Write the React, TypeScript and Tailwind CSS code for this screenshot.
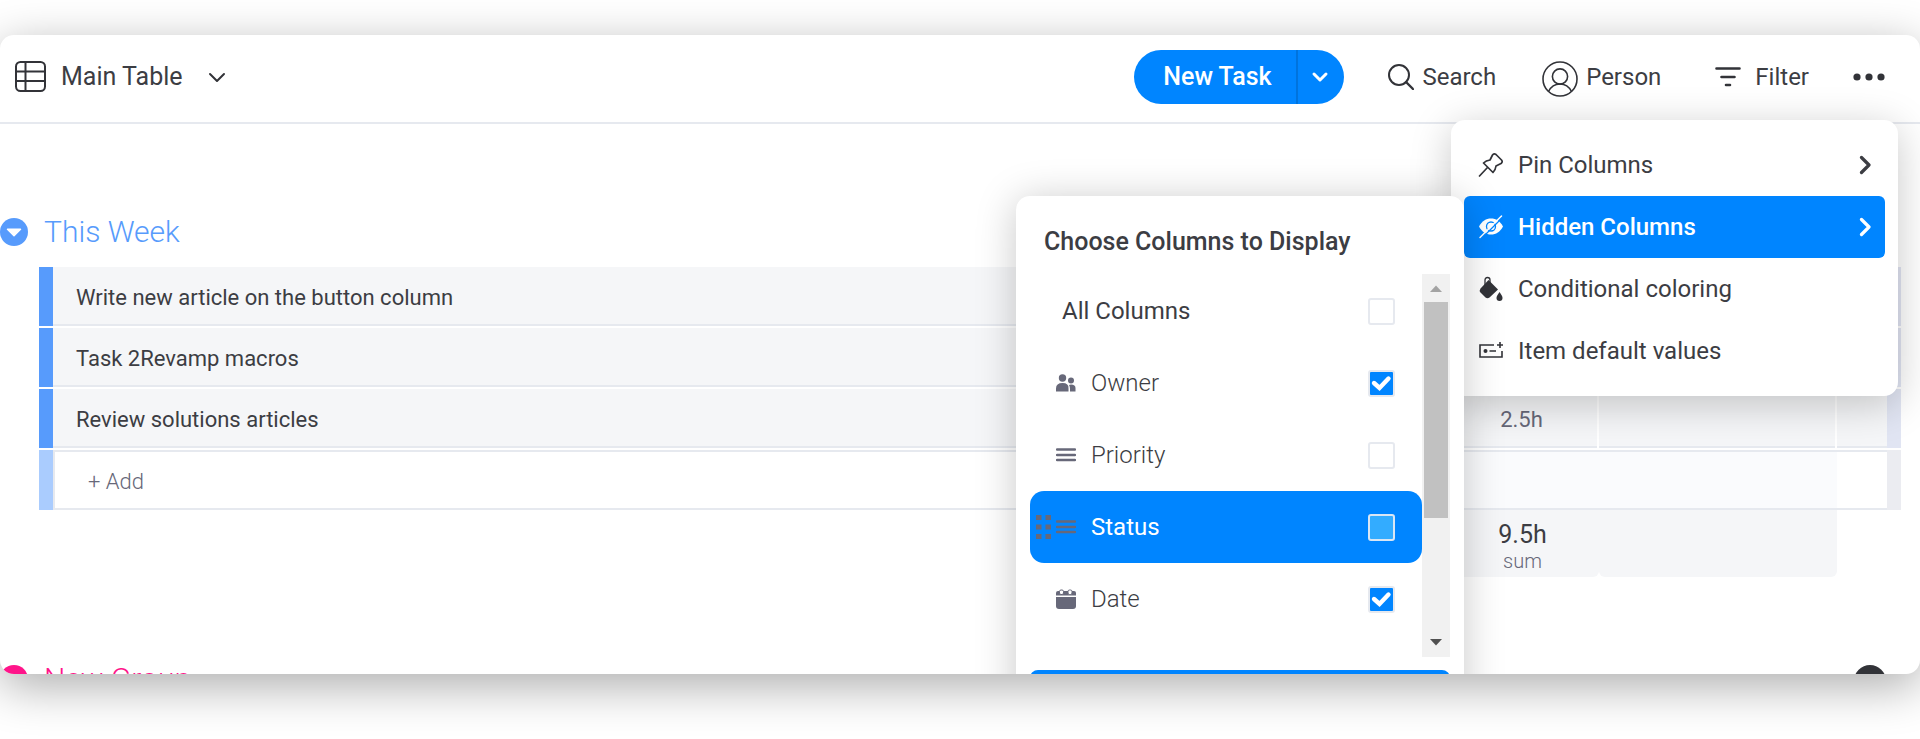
import { useState } from "react";
import type { ReactNode } from "react";

const tasks = [
  { name: "Write new article on the button column", estimate: "" },
  { name: "Task 2Revamp macros", estimate: "" },
  { name: "Review solutions articles", estimate: "2.5h" },
];

export default function App() {
  return (
    <div className="flex h-screen flex-col overflow-hidden bg-white pt-[35px] pb-[65px] font-[Roboto,sans-serif] text-[#3c3d43]">
      <main className="relative min-h-0 flex-1 overflow-hidden rounded-[14px] bg-white shadow-[0_12px_48px_rgba(0,0,0,0.33)]">
        <Toolbar />
        <section className="pt-[86px]">
          <GroupTitle color="#579bfc" title="This Week" />
          <TaskTable />
        </section>
        <section className="relative pt-20">
          <GroupTitle color="#ff158a" title="New Group" />
          <span className="absolute top-[88px] right-[34px] h-8 w-8 rounded-full bg-[#323338]"></span>
        </section>
        <ViewMenu />
      </main>
    </div>
  );
}

function Toolbar() {
  return (
    <header className="flex h-[89px] items-center border-b-2 border-[#e6e9ef] pr-[35px] pb-1 pl-[15px]">
      <button className="flex items-center">
        <TableIcon />
        <span className="ml-[14px] text-[25px] leading-8">Main Table</span>
        <svg className="ml-6 h-5 w-5" viewBox="0 0 20 20" fill="none">
          <path
            d="M3 7l7 7 7-7"
            stroke="#323338"
            strokeWidth="2"
            strokeLinecap="round"
            strokeLinejoin="round"
          />
        </svg>
      </button>
      <div className="ml-auto flex h-[54px] overflow-hidden rounded-full bg-[#0085ff] text-white">
        <button className="w-[162px] pl-1 text-[25px] font-medium">
          New Task
        </button>
        <button
          aria-label="More task types"
          className="flex w-12 items-center border-l-2 border-[#0073dd] pl-3"
        >
          <svg className="h-5 w-5" viewBox="0 0 20 20" fill="none">
            <path
              d="M4 7l6 6 6-6"
              stroke="currentColor"
              strokeWidth="3"
              strokeLinecap="round"
              strokeLinejoin="round"
            />
          </svg>
        </button>
      </div>
      <button className="ml-11 flex items-center gap-2">
        <svg className="h-[26px] w-[26px]" viewBox="0 0 26 26" fill="none">
          <circle cx="11" cy="11" r="10" stroke="#323338" strokeWidth="2" />
          <path
            d="M18 18l7 7"
            stroke="#323338"
            strokeWidth="2.4"
            strokeLinecap="round"
          />
        </svg>
        <span className="text-2xl">Search</span>
      </button>
      <button className="ml-[46px] flex items-center gap-2">
        <PersonIcon />
        <span className="text-2xl">Person</span>
      </button>
      <button className="ml-[54px] flex items-center gap-[14px]">
        <svg className="h-[22px] w-[26px]" viewBox="0 0 26 22" fill="none">
          <path
            d="M1.5 2.5h23M6.5 11h13M11 19h4"
            stroke="#323338"
            strokeWidth="2.6"
            strokeLinecap="round"
          />
        </svg>
        <span className="text-2xl">Filter</span>
      </button>
      <button aria-label="More options" className="ml-11">
        <svg className="h-8 w-8" viewBox="0 0 32 32" fill="#323338">
          <circle cx="4" cy="16" r="3.6" />
          <circle cx="16" cy="16" r="3.6" />
          <circle cx="28" cy="16" r="3.6" />
        </svg>
      </button>
    </header>
  );
}

function GroupTitle({ color, title }: { color: string; title: string }) {
  return (
    <div className="flex h-11 items-center gap-4" style={{ color }}>
      <svg className="h-7 w-7" viewBox="0 0 28 28">
        <circle cx="14" cy="14" r="14" fill="currentColor" />
        <path
          d="M7.5 11.2h13L14 17.8z"
          fill="#fff"
          stroke="#fff"
          strokeWidth="1.5"
          strokeLinejoin="round"
        />
      </svg>
      <h2 className="text-[30px] leading-9 font-light">{title}</h2>
    </div>
  );
}

function TaskTable() {
  return (
    <div className="pt-[13px] pr-[19px] pl-[39px]">
      <table className="w-full table-fixed border-separate border-spacing-0">
        <colgroup>
          <col className="w-[14px]" />
          <col />
          <col className="w-[153px]" />
          <col className="w-[238px]" />
          <col className="w-[50px]" />
          <col className="w-[14px]" />
        </colgroup>
        <tbody>
          {tasks.map((task) => (
            <tr key={task.name} className="h-[61px] bg-[#f5f6f8] text-[22px]">
              <td className="border-b-2 border-white bg-[#579bfc]"></td>
              <td className="border-b-2 border-white pt-[2px] pl-[23px] shadow-[inset_0_-2px_#e6e9ef]">
                {task.name}
              </td>
              <td className="border-r-2 border-b-2 border-white pt-[2px] text-center text-[#676879] shadow-[inset_0_-2px_#e6e9ef]">
                {task.estimate}
              </td>
              <td className="border-r-2 border-b-2 border-white shadow-[inset_0_-2px_#e6e9ef]"></td>
              <td className="border-b-2 border-white shadow-[inset_0_-2px_#e6e9ef]"></td>
              <td className="border-b-2 border-white bg-[#e1e5f3]"></td>
            </tr>
          ))}
          <tr className="h-[60px]">
            <td className="bg-[#aaccfe]"></td>
            <td className="border-y-2 border-l-2 border-[#e6e9ef] pt-[2px]">
              <input
                aria-label="Add task"
                placeholder="+ Add"
                className="w-full pl-[33px] text-[22px] font-light outline-none placeholder:text-[#676879]"
              />
            </td>
            <td className="border-y-2 border-[#e6e9ef] bg-[#fafbfd]"></td>
            <td className="border-y-2 border-[#e6e9ef] bg-[#fafbfd]"></td>
            <td className="border-y-2 border-[#e6e9ef]"></td>
            <td className="bg-[#ebecf1]"></td>
          </tr>
        </tbody>
        <tfoot>
          <tr className="h-[67px]">
            <td></td>
            <td></td>
            <td className="rounded-b-md bg-[#f5f6f8] pt-[7px] text-center">
              <div className="text-[25px] leading-7">9.5h</div>
              <div className="text-xl leading-6 font-light text-[#676879]">
                sum
              </div>
            </td>
            <td className="rounded-b-md bg-[#f5f6f8]"></td>
            <td></td>
            <td></td>
          </tr>
        </tfoot>
      </table>
    </div>
  );
}

function ViewMenu() {
  return (
    <div className="absolute top-[85px] right-[22px] w-[447px] rounded-[14px] bg-white px-[13px] py-[14px] shadow-[0_8px_40px_rgba(0,0,0,0.22)]">
      <MenuItem icon={<PinIcon />} label="Pin Columns" arrow />
      <MenuItem icon={<HiddenIcon />} label="Hidden Columns" arrow active />
      <MenuItem icon={<PaintIcon />} label="Conditional coloring" />
      <MenuItem icon={<DefaultsIcon />} label="Item default values" />
      <ColumnsPanel />
    </div>
  );
}

type MenuItemProps = {
  icon: ReactNode;
  label: string;
  arrow?: boolean;
  active?: boolean;
};

function MenuItem({ icon, label, arrow, active }: MenuItemProps) {
  return (
    <button
      className={
        active
          ? "flex h-[62px] w-full items-center rounded-md bg-[#0085ff] px-[14px] text-2xl font-medium text-white"
          : "flex h-[62px] w-full items-center rounded-md px-[14px] text-2xl"
      }
    >
      {icon}
      <span className="ml-[14px]">{label}</span>
      {arrow && (
        <svg className="ml-auto h-5 w-3" viewBox="0 0 12 20" fill="none">
          <path
            d="M2.5 2.5L10 10l-7.5 7.5"
            stroke="currentColor"
            strokeWidth="3.2"
            strokeLinecap="round"
            strokeLinejoin="round"
          />
        </svg>
      )}
    </button>
  );
}

function ColumnsPanel() {
  const [checked, setChecked] = useState<Record<string, boolean>>({
    Owner: true,
    Date: true,
  });

  const toggle = (label: string) =>
    setChecked((prev) => ({ ...prev, [label]: !prev[label] }));

  return (
    <div className="absolute top-[76px] right-[434px] w-[448px] rounded-[14px] bg-white pb-6 shadow-[0_4px_40px_rgba(0,0,0,0.22)]">
      <h3 className="px-7 pt-[30px] pb-4 text-[25px] leading-8 font-medium">
        Choose Columns to Display
      </h3>
      <div className="mx-[14px] flex h-[383px]">
        <div className="flex-1 pt-px">
          <ColumnRow label="All Columns" checked={checked} toggle={toggle} />
          <ColumnRow
            label="Owner"
            icon={<PeopleIcon />}
            checked={checked}
            toggle={toggle}
          />
          <ColumnRow
            label="Priority"
            icon={<LinesIcon />}
            checked={checked}
            toggle={toggle}
          />
          <ColumnRow
            label="Status"
            icon={<LinesIcon />}
            checked={checked}
            toggle={toggle}
            active
          />
          <ColumnRow
            label="Date"
            icon={<CalendarIcon />}
            checked={checked}
            toggle={toggle}
          />
        </div>
        <div className="flex w-7 flex-col items-center bg-[#f1f1f1]">
          <svg className="h-7 w-7" viewBox="0 0 28 28">
            <path d="M8 18h12l-6-6.5z" fill="#a3a3a3" />
          </svg>
          <div className="h-[216px] w-6 bg-[#c1c1c1]"></div>
          <svg className="mt-auto h-7 w-7" viewBox="0 0 28 28">
            <path d="M8 10h12l-6 6.5z" fill="#505050" />
          </svg>
        </div>
      </div>
      <div className="px-[14px] pt-[13px]">
        <button
          aria-label="Save"
          className="h-14 w-full rounded-lg bg-[#0085ff]"
        ></button>
      </div>
    </div>
  );
}

type ColumnRowProps = {
  label: string;
  icon?: ReactNode;
  checked: Record<string, boolean>;
  toggle: (label: string) => void;
  active?: boolean;
};

function ColumnRow({ label, icon, checked, toggle, active }: ColumnRowProps) {
  return (
    <label
      className={
        active
          ? "flex h-[72px] items-center rounded-[14px] bg-[#0085ff] pr-[27px] text-2xl text-white"
          : "flex h-[72px] items-center pr-[27px] text-2xl"
      }
    >
      {icon ? (
        <>
          <span className="w-[26px] pl-[6px]">{active && <DragIcon />}</span>
          {icon}
          <span className={active ? "ml-[15px]" : "ml-[15px] font-light"}>
            {label}
          </span>
        </>
      ) : (
        <span className="ml-8">{label}</span>
      )}
      <span className="relative ml-auto h-[27px] w-[27px]">
        <input
          type="checkbox"
          checked={!!checked[label]}
          onChange={() => toggle(label)}
          className={
            active
              ? "block h-[27px] w-[27px] appearance-none rounded-[3px] border-2 border-[#d9e6f5] bg-[#33acff]"
              : "block h-[27px] w-[27px] appearance-none rounded-[3px] border-2 border-[#e6e9ef] bg-white checked:bg-[#0085ff]"
          }
        />
        {checked[label] && (
          <svg
            className="pointer-events-none absolute inset-0 h-[27px] w-[27px]"
            viewBox="0 0 27 27"
            fill="none"
          >
            <path
              d="M6 13l5.5 5L20.5 8.5"
              stroke="#fff"
              strokeWidth="4.4"
              strokeLinecap="round"
            />
          </svg>
        )}
      </span>
    </label>
  );
}

function TableIcon() {
  return (
    <svg className="h-8 w-8" viewBox="0 0 32 32" fill="none">
      <rect
        x="1"
        y="1"
        width="29"
        height="29"
        rx="4.5"
        stroke="#323338"
        strokeWidth="2"
      />
      <path d="M1 10.5h29M1 20h29M10.5 1v29" stroke="#323338" strokeWidth="2" />
    </svg>
  );
}

function PersonIcon() {
  return (
    <svg className="mt-1 h-9 w-9" viewBox="0 0 36 36" fill="none">
      <g stroke="#323338" strokeWidth="1.6">
        <circle cx="18" cy="18" r="17" />
        <circle cx="18" cy="15.5" r="7.6" />
        <path d="M6.5 30.5C9 25.5 13 23 18 23s9 2.5 11.5 7.5" />
      </g>
    </svg>
  );
}

function PinIcon() {
  return (
    <svg className="h-[26px] w-[26px]" viewBox="0 0 26 26" fill="none">
      <path
        d="M14.5 3Q16 1 18 2.5L23.5 8Q25 10 23 11.5L18 14Q17.5 18 15 20.5L5.5 11Q8 8.5 12 8zM9.5 15.5L1.5 24"
        stroke="#323338"
        strokeWidth="1.7"
        strokeLinejoin="round"
        strokeLinecap="round"
      />
    </svg>
  );
}

function HiddenIcon() {
  return (
    <svg className="h-[26px] w-[26px]" viewBox="0 0 26 26" fill="none">
      <path
        d="M1 12.5C4 7 8 4.5 13 4.5s9 2.5 12 8c-3 5.5-7 8-12 8s-9-2.5-12-8z"
        fill="#fff"
      />
      <circle cx="13" cy="12.5" r="4.5" stroke="#0085ff" strokeWidth="1.3" />
      <path d="M4 24L25.5 2.5" stroke="#0085ff" strokeWidth="1.2" />
      <path
        d="M2 23.5L23.5 2"
        stroke="#fff"
        strokeWidth="1.5"
        strokeLinecap="round"
      />
    </svg>
  );
}

function PaintIcon() {
  return (
    <svg className="h-[26px] w-[26px]" viewBox="0 0 26 26" fill="none">
      <path
        d="M10.5 4L20 13.5 11.5 21.5q-2 1.5-4 0l-5-5q-1.5-2 0-4z"
        fill="#323338"
      />
      <path
        d="M7 10V4q0-2.500 2.500-2.500T12 4v4"
        stroke="#323338"
        strokeWidth="1.3"
      />
      <path
        d="M21.5 16c2 3 3 4.500 3 6a3 3 0 0 1-6 0c0-1.500 1-3 3-6z"
        fill="#323338"
      />
    </svg>
  );
}

function DefaultsIcon() {
  return (
    <svg className="h-[26px] w-[26px]" viewBox="0 0 26 26" fill="none">
      <path
        d="M16 7H2v12h22v-6M22 4v6M19 7h6M11.5 13H18"
        stroke="#323338"
        strokeWidth="1.6"
      />
      <circle cx="7.5" cy="13" r="2" fill="#323338" />
    </svg>
  );
}

function PeopleIcon() {
  return (
    <svg className="h-5 w-5" viewBox="0 0 20 20" fill="#676879">
      <circle cx="6.5" cy="5" r="3.7" />
      <circle cx="15" cy="7.5" r="3" />
      <path d="M0 18.5v-3Q0 10 6.5 10T12.5 15.500v3z" />
      <path d="M14 18.5h5.500V15q0-3.500-4.500-3.500l-2 .5q1 1.500 1 4z" />
    </svg>
  );
}

function LinesIcon() {
  return (
    <svg className="h-5 w-5" viewBox="0 0 20 20" fill="none">
      <path
        d="M1 4.500h18M1 10h18M1 15h18"
        stroke="#676879"
        strokeWidth="2.4"
        strokeLinecap="round"
      />
    </svg>
  );
}

function CalendarIcon() {
  return (
    <svg className="h-5 w-5" viewBox="0 0 20 20">
      <path d="M0 6.500V4q0-2 2-2h16q2 0 2 2v2.500z" fill="#676879" />
      <path d="M0 8h20v9q0 3-3 3H3q-3 0-3-3z" fill="#676879" />
      <rect
        x="3.5"
        y="1"
        width="4"
        height="4.5"
        rx="1.5"
        fill="#fff"
        stroke="#676879"
      />
      <rect
        x="12"
        y="1"
        width="4"
        height="4.5"
        rx="1.5"
        fill="#fff"
        stroke="#676879"
      />
    </svg>
  );
}

function DragIcon() {
  return (
    <svg className="h-6 w-4" viewBox="0 0 16 24" fill="#676879">
      <rect x="0" y="0" width="5.5" height="5" />
      <rect x="9.5" y="0" width="5.5" height="5" />
      <rect x="0" y="9.5" width="5.5" height="5" />
      <rect x="9.5" y="9.5" width="5.5" height="5" />
      <rect x="0" y="19" width="5.5" height="5" />
      <rect x="9.5" y="19" width="5.5" height="5" />
    </svg>
  );
}
